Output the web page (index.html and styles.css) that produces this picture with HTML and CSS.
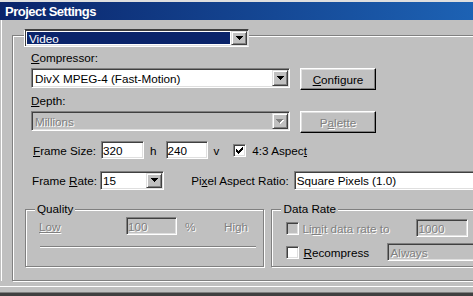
FILE: index.html
```html
<!doctype html>
<html lang="en">
	<head>
		<meta charset="UTF-8">
		<meta name="viewport" content="width=device-width, initial-scale=1.0">
		<title>Project Settings</title>
		<link rel="stylesheet" href="styles.css">
	</head>
	<body>
		<div class="window">
			<div class="titlebar">Project Settings</div>
			<div class="client">
				<div class="box main">

					<div class="combo video">
						<span class="value"><span class="sel">Video</span></span>
						<span class="arrow"><svg width="7" height="4" viewBox="0 0 7 4"><path d="M0 0h7v1h-1v1h-1v1h-1v1h-1v-1h-1v-1h-1v-1h-1z"/></svg></span>
					</div>

					<div class="label"><u>C</u>ompressor:</div>
					<div class="row">
						<div class="combo wide">
							<span class="value">DivX MPEG-4 (Fast-Motion)</span>
							<span class="arrow"><svg width="7" height="4" viewBox="0 0 7 4"><path d="M0 0h7v1h-1v1h-1v1h-1v1h-1v-1h-1v-1h-1v-1h-1z"/></svg></span>
						</div>
						<div class="btn"><span><u>C</u>onfigure</span></div>
					</div>

					<div class="label"><u>D</u>epth:</div>
					<div class="row">
						<div class="combo wide off">
							<span class="value">Millions</span>
							<span class="arrow"><svg width="8" height="5" viewBox="0 0 8 5"><path fill="#fff" d="M1 1h7v1h-1v1h-1v1h-1v1h-1v-1h-1v-1h-1v-1h-1z"/><path fill="#808080" d="M0 0h7v1h-1v1h-1v1h-1v1h-1v-1h-1v-1h-1v-1h-1z"/></svg></span>
						</div>
						<div class="btn off"><span>P<u>a</u>lette</span></div>
					</div>

					<div class="row frame">
						<span class="flabel"><u>F</u>rame Size:</span>
						<div class="field num">320</div>
						<span class="hh">h</span>
						<div class="field num n2">240</div>
						<span class="vv">v</span>
						<span class="check"><svg width="7" height="7" viewBox="0 0 7 7"><path d="M6 0h1v3h-1zM5 1h1v3h-1zM4 2h1v3h-1zM3 3h1v3h-1zM2 4h1v3h-1zM1 3h1v3h-1zM0 2h1v3h-1z"/></svg></span>
						<span class="clabel">4:3 Aspec<u>t</u></span>
					</div>

					<div class="row frame rate">
						<span class="flabel">Frame <u>R</u>ate:</span>
						<div class="combo fps">
							<span class="value">15</span>
							<span class="arrow"><svg width="7" height="4" viewBox="0 0 7 4"><path d="M0 0h7v1h-1v1h-1v1h-1v1h-1v-1h-1v-1h-1v-1h-1z"/></svg></span>
						</div>
						<span class="plabel">Pi<u>x</u>el Aspect Ratio:</span>
						<div class="combo pixel">
							<span class="value">Square Pixels (1.0)</span>
							<span class="arrow"><svg width="7" height="4" viewBox="0 0 7 4"><path d="M0 0h7v1h-1v1h-1v1h-1v1h-1v-1h-1v-1h-1v-1h-1z"/></svg></span>
						</div>
					</div>

					<div class="row groups">
						<div class="box quality">
							<div class="legend">Quality</div>
							<div class="qrow">
								<span class="low dim"><u>Low</u></span>
								<div class="field q off">100</div>
								<span class="pct dim">%</span>
								<span class="dim">High</span>
							</div>
							<div class="track"></div>
						</div>
						<div class="box datarate">
							<div class="legend">Data Rate</div>
							<div class="drow">
								<span class="check off"></span>
								<span class="dl dim">Li<u>m</u>it data rate to</span>
								<div class="field d off">1000</div>
							</div>
							<div class="drow second">
								<span class="check"></span>
								<span class="dl2"><u>R</u>ecompress</span>
								<div class="combo always off">
									<span class="value">Always</span>
								</div>
							</div>
						</div>
					</div>

				</div>
			</div>
			<div class="footer"></div>
			<div class="edge"></div>
		</div>
	</body>
</html>
```

FILE: styles.css
```css
body{
	margin: 0;
	background: #c0c0c0;
	font-family: "Liberation Sans", Arial, sans-serif;
	font-size: 11.7px;
	color: #000;
	overflow: hidden;
}

.window{
	width: 473px;
	height: 296px;
	overflow: hidden;
	box-sizing: border-box;
	border-top: 2px solid #dfdfdf;
}

.titlebar{
	height: 18px;
	box-sizing: border-box;
	padding: 2px 0 0 5px;
	line-height: 16px;
	font-size: 13px;
	font-weight: bold;
	letter-spacing: -0.5px;
	color: #fff;
	background: linear-gradient(to right, #0a246a, #1d62b4);
}

.client{
	margin-left: 1px;
	border-left: 1px solid #fff;
	padding: 15px 0 0 10px;
}

/* etched frame */
.box{
	box-sizing: border-box;
	border: 1px solid #808080;
	box-shadow: 1px 1px 0 #fff, inset 1px 1px 0 #fff;
}

.main{
	width: 480px;
	height: 246px;
	padding-left: 11px;
}

/* sunken edit / combo */
.field, .combo, .check{
	box-sizing: border-box;
	background: #fff;
	border: 1px solid;
	border-color: #808080 #fff #fff #808080;
	box-shadow: inset 1px 1px 0 #404040, inset -1px -1px 0 #dfdfdf;
}

.field{
	display: flex;
	align-items: center;
	height: 18px;
	padding-left: 1px;
}

.combo{
	display: flex;
	padding: 1px;
}

.combo .value{
	flex: 1;
	display: flex;
	align-items: center;
	padding-left: 1px;
	white-space: nowrap;
	overflow: hidden;
}

.arrow{
	width: 16px;
	box-sizing: border-box;
	display: flex;
	align-items: center;
	justify-content: center;
	background: #c0c0c0;
	border: 1px solid;
	border-color: #dfdfdf #404040 #404040 #dfdfdf;
	box-shadow: inset 1px 1px 0 #fff, inset -1px -1px 0 #808080;
}

.arrow svg{
	display: block;
	shape-rendering: crispEdges;
}

.off, .off .value{
	background: #c0c0c0;
	color: #808080;
	text-shadow: 1px 1px 0 #fff;
}

.dim{
	color: #808080;
	text-shadow: 1px 1px 0 #fff;
}

.video{
	width: 225px;
	height: 18px;
	margin-top: -7px;
	border-color: #404040 #dfdfdf #fff #fff;
}

.video .value{
	padding: 1px;
}

.sel{
	flex: 1;
	align-self: stretch;
	display: flex;
	align-items: center;
	padding-left: 2px;
	background: #0a246a;
	color: #fff;
}

.label{
	margin: 4px 0 0 7px;
	height: 14px;
	line-height: 14px;
}

.row{
	display: flex;
	align-items: flex-start;
	margin: 3px 0 0 7px;
}

.wide{
	width: 259px;
	height: 20px;
	padding-left: 2px;
}

.btn{
	box-sizing: border-box;
	width: 76px;
	height: 22px;
	margin-left: 10px;
	display: flex;
	align-items: center;
	justify-content: center;
	background: #c0c0c0;
	border: 1px solid;
	border-color: #fff #000 #000 #fff;
	box-shadow: inset -1px -1px 0 #808080, inset 1px 1px 0 #dfdfdf;
}

.btn.off{
	background: #c0c0c0;
}

.frame{
	align-items: center;
	height: 18px;
	margin-top: 8px;
}

.flabel{
	width: 68px;
	margin-left: 2px;
	white-space: nowrap;
}

.num{
	width: 43px;
}

.num.n2{
	width: 42px;
}

.hh{
	margin: 0 9px 0 6px;
}

.vv{
	margin: 0 14px 0 6px;
}

.check{
	width: 13px;
	height: 13px;
	padding: 2px;
	display: flex;
}

.check svg{
	display: block;
	shape-rendering: crispEdges;
}

.clabel{
	margin-left: 6px;
}

.rate{
	height: 20px;
	margin-top: 11px;
}

.rate .flabel{
	width: 69px;
	margin-left: 1px;
}

.fps{
	width: 65px;
	height: 19px;
}

.plabel{
	width: 104px;
	margin-left: 27px;
	white-space: nowrap;
}

.pixel{
	width: 200px;
	height: 19px;
}

.groups{
	margin: 19px 0 0 1px;
}

.quality{
	width: 240px;
	height: 58px;
}

.datarate{
	width: 220px;
	height: 58px;
	margin-left: 7px;
}

.legend{
	width: fit-content;
	height: 14px;
	line-height: 14px;
	margin: -8px 0 0 9px;
	padding: 0 2px;
	background: #c0c0c0;
}

.qrow{
	display: flex;
	align-items: center;
	height: 18px;
	margin: 1px 0 0 13px;
}

.low{
	width: 87px;
}

.q{
	width: 51px;
}

.pct{
	width: 39px;
	margin-left: 8px;
}

.track{
	width: 216px;
	height: 0;
	margin: 11px 0 0 14px;
	border-top: 1px solid #808080;
	border-bottom: 1px solid #fff;
}

.drow{
	display: flex;
	align-items: center;
	height: 18px;
	margin: 3px 0 0 14px;
}

.drow.second{
	margin-top: 6px;
}

.dl{
	width: 114px;
	margin-left: 3px;
	white-space: nowrap;
}

.d{
	width: 52px;
	flex: none;
}

.dl2{
	width: 84px;
	margin-left: 4px;
}

.always{
	width: 100px;
	height: 18px;
	flex: none;
}

.footer{
	margin-top: 5px;
	height: 5px;
	border-top: 1px solid #fff;
	border-bottom: 1px solid #808080;
}

.edge{
	height: 4px;
	background: #404040;
}
```
